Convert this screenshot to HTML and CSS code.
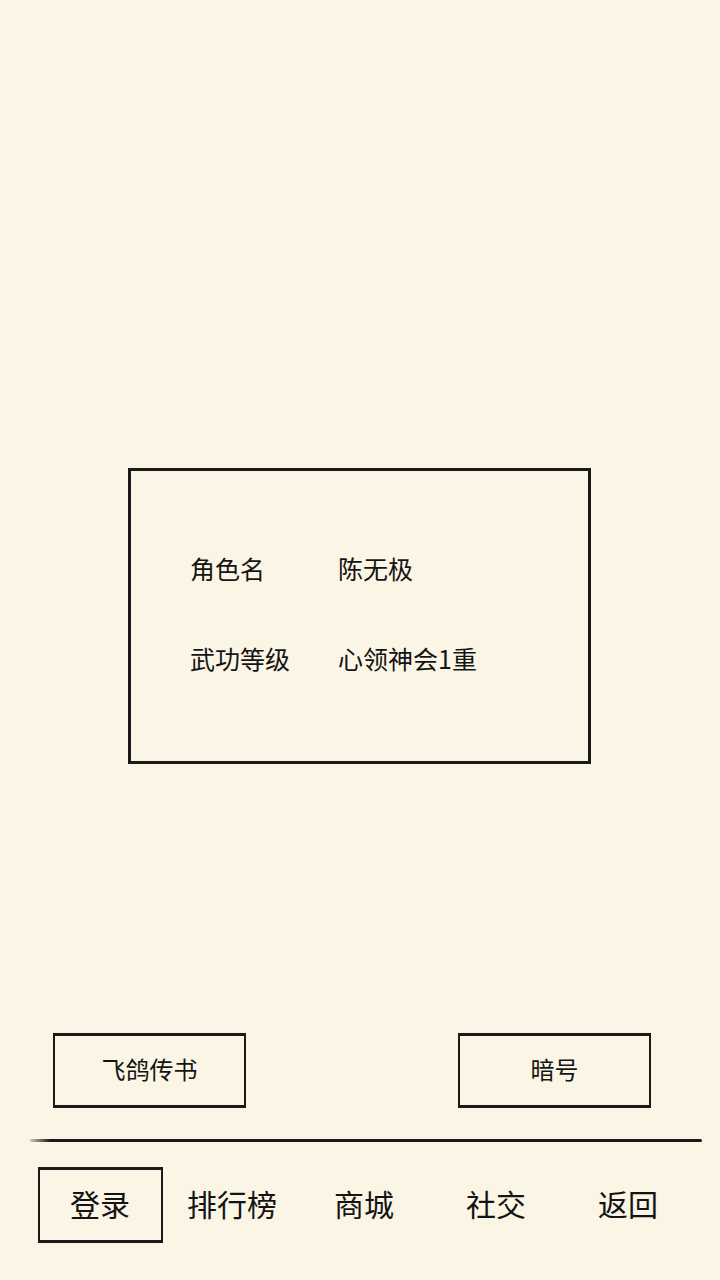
FILE: index.html
```html
<!DOCTYPE html>
<html lang="zh-CN">
<head>
<meta charset="utf-8">
<link rel="stylesheet" href="styles.css">
</head>
<body>
<div class="screen">
  <div class="card">
    <div class="row"><span class="label">角色名</span><span class="value">陈无极</span></div>
    <div class="row"><span class="label">武功等级</span><span class="value">心领神会1重</span></div>
  </div>
  <div class="actions">
    <div class="btn">飞鸽传书</div>
    <div class="btn">暗号</div>
  </div>
  <div class="divider"></div>
  <div class="tabs">
    <div class="tab"><span class="tab-box active">登录</span></div>
    <div class="tab"><span class="tab-box">排行榜</span></div>
    <div class="tab"><span class="tab-box">商城</span></div>
    <div class="tab"><span class="tab-box">社交</span></div>
    <div class="tab"><span class="tab-box">返回</span></div>
  </div>
</div>
</body>
</html>
```
FILE: styles.css
```css
html, body {
  margin: 0;
  padding: 0;
  background: #faf5e4;
}
.screen {
  width: 720px;
  height: 1280px;
  display: flex;
  flex-direction: column;
  font-family: "Noto Sans CJK SC", "Noto Sans", sans-serif;
  color: #141414;
  overflow: hidden;
}
.card {
  margin: 468px 0 0 128px;
  width: 463px;
  height: 296px;
  box-sizing: border-box;
  border-top: 3px solid #1a1a1a;
  border-bottom: 3px solid #1a1a1a;
  border-left: 3px solid #1a1a1a;
  border-right: 3px solid #1a1a1a;
  padding: 82px 0 0 59px;
  display: flex;
  flex-direction: column;
  gap: 60px;
}
.row {
  display: flex;
  font-size: 25px;
  line-height: 30px;
  height: 30px;
}
.label {
  width: 148px;
}
.actions {
  margin-top: 269px;
  display: flex;
  justify-content: space-between;
  padding: 0 69px 0 53px;
}
.btn {
  width: 193px;
  height: 75px;
  box-sizing: border-box;
  border: 3px solid #1a1a1a;
  border-left-width: 2px;
  border-right-width: 2px;
  padding-bottom: 4px;
  display: flex;
  align-items: center;
  justify-content: center;
  font-size: 24px;
}
.divider {
  margin: 31px 18px 0 30px;
  height: 3px;
  background: linear-gradient(90deg, rgba(26,26,26,0.2) 0%, #1a1a1a 3%, #1a1a1a 100%);
  border-radius: 2px;
}
.tabs {
  margin-top: 25px;
  padding-left: 34px;
  display: grid;
  grid-template-columns: repeat(5, 132px);
}
.tab {
  height: 76px;
  display: flex;
  align-items: center;
  justify-content: center;
}
.tab-box {
  width: 125px;
  height: 76px;
  box-sizing: border-box;
  padding-bottom: 5px;
  display: flex;
  align-items: center;
  justify-content: center;
  font-size: 30px;
  border: 2px solid transparent;
}
.tab-box.active {
  border: 2px solid #1a1a1a;
  border-top-width: 3px;
  border-bottom-width: 3px;
}
```
